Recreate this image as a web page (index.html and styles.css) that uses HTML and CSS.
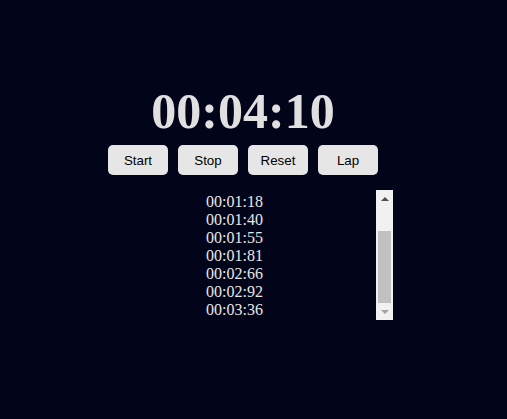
FILE: index.html
```html
<!DOCTYPE html>
<html lang="en">
<head>
<meta charset="utf-8">
<title>Stopwatch</title>
<link rel="stylesheet" href="styles.css">
</head>
<body>
<div class="app">
  <div class="timer">00:04:10</div>
  <div class="controls">
    <button class="btn">Start</button>
    <button class="btn">Stop</button>
    <button class="btn">Reset</button>
    <button class="btn">Lap</button>
  </div>
  <div class="laps">
    <div class="lap-list">
      <div class="lap">00:01:18</div>
      <div class="lap">00:01:40</div>
      <div class="lap">00:01:55</div>
      <div class="lap">00:01:81</div>
      <div class="lap">00:02:66</div>
      <div class="lap">00:02:92</div>
      <div class="lap">00:03:36</div>
    </div>
    <div class="scrollbar">
      <div class="sb-btn"><span class="arrow-up"></span></div>
      <div class="sb-track"><div class="sb-thumb"></div></div>
      <div class="sb-btn"><span class="arrow-down"></span></div>
    </div>
  </div>
</div>
</body>
</html>
```
FILE: styles.css
```css
html, body {
  margin: 0;
  background: #02051a;
}
body {
  width: 507px;
  height: 419px;
  overflow: hidden;
}
.app {
  width: 486px;
  padding-top: 83px;
  display: flex;
  flex-direction: column;
  align-items: center;
}
.timer {
  font-family: "Liberation Serif", "Times New Roman", serif;
  font-weight: bold;
  font-size: 50px;
  line-height: 56px;
  color: #e0e0e0;
}
.controls {
  margin-top: 6px;
  display: flex;
  gap: 10px;
}
.btn {
  width: 60px;
  height: 30px;
  border: none;
  border-radius: 5px;
  background: #e6e6e6;
  color: #000;
  font-family: "Liberation Sans", Arial, sans-serif;
  font-size: 13.333px;
  padding: 0;
}
.laps {
  align-self: flex-start;
  margin-left: 193px;
  margin-top: 15px;
  width: 200px;
  height: 130px;
  display: flex;
}
.lap-list {
  flex: 1;
  overflow: hidden;
  padding: 3px 0 0 13px;
}
.lap {
  font-family: "Liberation Serif", "Times New Roman", serif;
  font-size: 16px;
  line-height: 18px;
  color: #e8e8e8;
}
.scrollbar {
  width: 17px;
  background: #f1f1f1;
  display: flex;
  flex-direction: column;
}
.sb-btn {
  height: 17px;
  display: flex;
  align-items: center;
  justify-content: center;
}
.arrow-up {
  width: 0;
  height: 0;
  border-left: 4px solid transparent;
  border-right: 4px solid transparent;
  border-bottom: 4px solid #505050;
}
.arrow-down {
  width: 0;
  height: 0;
  border-left: 4px solid transparent;
  border-right: 4px solid transparent;
  border-top: 4px solid #a3a3a3;
}
.sb-track {
  flex: 1;
  display: flex;
  flex-direction: column;
  justify-content: flex-end;
  padding: 0 2px;
}
.sb-thumb {
  height: 72px;
  background: #c1c1c1;
}
```
